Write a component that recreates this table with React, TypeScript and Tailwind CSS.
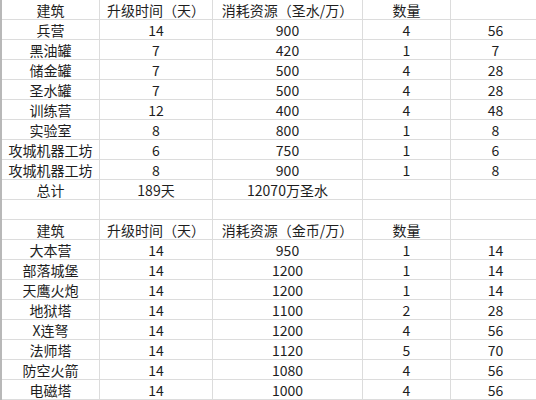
const rows1: string[][] = [
  ["建筑", "升级时间（天）", "消耗资源（圣水/万）", "数量", ""],
  ["兵营", "14", "900", "4", "56"],
  ["黑油罐", "7", "420", "1", "7"],
  ["储金罐", "7", "500", "4", "28"],
  ["圣水罐", "7", "500", "4", "28"],
  ["训练营", "12", "400", "4", "48"],
  ["实验室", "8", "800", "1", "8"],
  ["攻城机器工坊", "6", "750", "1", "6"],
  ["攻城机器工坊", "8", "900", "1", "8"],
  ["总计", "189天", "12070万圣水", "", ""],
  ["", "", "", "", ""],
];

const rows2: string[][] = [
  ["建筑", "升级时间（天）", "消耗资源（金币/万）", "数量", ""],
  ["大本营", "14", "950", "1", "14"],
  ["部落城堡", "14", "1200", "1", "14"],
  ["天鹰火炮", "14", "1200", "1", "14"],
  ["地狱塔", "14", "1100", "2", "28"],
  ["X连弩", "14", "1200", "4", "56"],
  ["法师塔", "14", "1120", "5", "70"],
  ["防空火箭", "14", "1080", "4", "56"],
  ["电磁塔", "14", "1000", "4", "56"],
];

export default function App() {
  const rows = [...rows1, ...rows2];
  return (
    <div
      className="w-[536px] h-[400px] overflow-hidden bg-white text-[#1e1e1e] text-[14px]"
      style={{ fontFamily: '"Noto Sans CJK SC", "Noto Sans", sans-serif' }}
    >
      <div className="border-l-2 border-[#b8b8b8] grid grid-cols-[98px_113px_150px_88px_90px]">
        {rows.map((row, i) =>
          row.map((cell, j) => (
            <div
              key={i + "-" + j}
              className="h-[20px] border-r border-b border-[#dcdcdc] flex items-center justify-center leading-none whitespace-nowrap"
            >
              {cell}
            </div>
          ))
        )}
      </div>
    </div>
  );
}
